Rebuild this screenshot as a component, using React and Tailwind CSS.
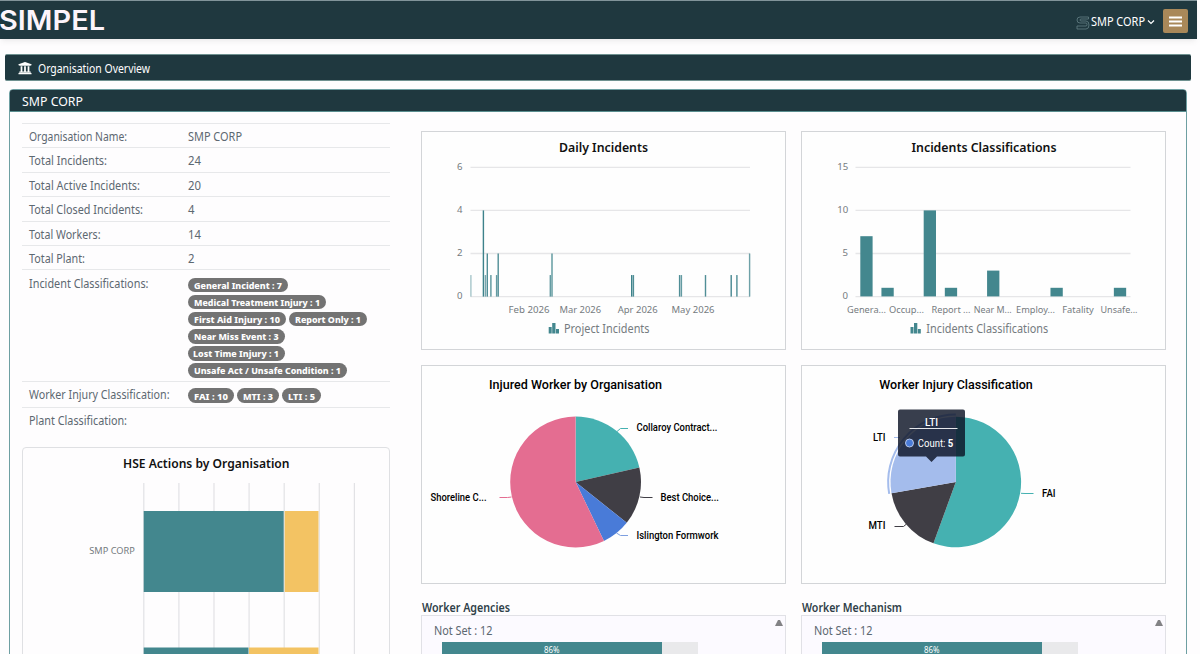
import { FaUniversity } from "react-icons/fa"

const summary = [
  { label: "Organisation Name:", value: "SMP CORP", width: 98, valueWidth: 54 },
  { label: "Total Incidents:", value: "24", width: 78, valueWidth: 13 },
  { label: "Total Active Incidents:", value: "20", width: 111, valueWidth: 13 },
  { label: "Total Closed Incidents:", value: "4", width: 114, valueWidth: 6.5 },
  { label: "Total Workers:", value: "14", width: 71.5, valueWidth: 13 },
  { label: "Total Plant:", value: "2", width: 56, valueWidth: 6.5 },
]

const incidentTags = [
  { text: "General Incident : 7", size: "w-[100px]", width: 88 },
  { text: "Medical Treatment Injury : 1", size: "w-[138px]", width: 126 },
  { text: "First Aid Injury : 10", size: "w-[98px]", width: 86 },
  { text: "Report Only : 1", size: "w-[78px]", width: 66 },
  { text: "Near Miss Event : 3", size: "w-[97px]", width: 84.5 },
  { text: "Lost Time Injury : 1", size: "w-[97px]", width: 86 },
  { text: "Unsafe Act / Unsafe Condition : 1", size: "w-[159px]", width: 147 },
]

const injuryTags = [
  { text: "FAI : 10", size: "w-[46px]", width: 34 },
  { text: "MTI : 3", size: "w-[42px]", width: 30 },
  { text: "LTI : 5", size: "w-[39px]", width: 27 },
]

const dailyBars = [
  [48.9, 1, 0.45], [61.4, 4, 1], [63.4, 1, 0.7], [65.3, 2, 0.9], [68.9, 1, 0.85],
  [74.6, 1, 0.8], [76.2, 2, 0.9], [128.3, 1, 0.8], [130, 2, 0.85], [209.7, 1, 1],
  [211.4, 1, 0.9], [257.6, 1, 0.9], [259.4, 1, 0.8], [283.5, 1, 0.9], [309.2, 1, 0.95],
  [314.9, 1, 0.9], [327.6, 2, 0.75],
]

const classificationBars = [7, 1, 0, 10, 1, 0, 3, 0, 0, 1, 0, 0, 1]

const organisationSlices = [
  { value: 3, color: "#45b1b1" },
  { value: 2, color: "#403e45" },
  { value: 1, color: "#497bd8" },
  { value: 8, color: "#e46d91" },
]

const injurySlices = [
  { value: 10, color: "#45b1b1" },
  { value: 3, color: "#403e45" },
  { value: 5, color: "#a4bcec" },
]

function Label({ children, width, size = 12, height = 16, base = 12, weight = 400, className = "" }) {
  return (
    <svg width={width} height={height} className={`block shrink-0 overflow-visible ${className}`}>
      <text x="0" y={base} fontSize={size} fontWeight={weight} textLength={width} lengthAdjust="spacingAndGlyphs" fill="currentColor">
        {children}
      </text>
    </svg>
  )
}

function ChartText({ x, y, width, size = 9.5, fill = "#757b7f", weight = 400, children }) {
  return (
    <text x={x} y={y} textLength={width} lengthAdjust="spacingAndGlyphs" fontSize={size} fontWeight={weight} fill={fill}>
      {children}
    </text>
  )
}

function Tag({ tag }) {
  return (
    <span className={`flex h-[14.5px] items-center justify-center rounded-full bg-[#737373] text-white ${tag.size}`}>
      <Label width={tag.width} size={9.5} height={14} base={10.5} weight={800}>{tag.text}</Label>
    </span>
  )
}

function Card({ children }) {
  return <div className="h-[219px] w-[365px] border border-[#d3d5d8] bg-[#fefefe]">{children}</div>
}

function ColumnIcon({ x, y }) {
  return (
    <g fill="#43878e">
      <rect x={x} y={y + 4} width="3" height="6.500" />
      <rect x={x + 3.5} y={y} width="3.300" height="10.500" />
      <rect x={x + 7.3} y={y + 6} width="3" height="4.500" />
    </g>
  )
}

function slicePath(cx, cy, r, from, to) {
  const a = (from - 90) * (Math.PI / 180)
  const b = (to - 90) * (Math.PI / 180)
  const large = to - from > 180 ? 1 : 0
  return `M${cx} ${cy}L${cx + r * Math.cos(a)} ${cy + r * Math.sin(a)}A${r} ${r} 0 ${large} 1 ${cx + r * Math.cos(b)} ${cy + r * Math.sin(b)}Z`
}

function Pie({ slices, cx, cy, r }) {
  const total = slices.reduce((sum, s) => sum + s.value, 0)
  let start = 0
  return slices.map((s) => {
    const from = start
    start += (s.value / total) * 360
    return <path key={s.color} d={slicePath(cx, cy, r, from, start)} fill={s.color} />
  })
}

function DailyIncidents() {
  return (
    <svg width="363" height="217" className="block">
      <ChartText x={137} y={19.5} width={89} size={13} weight={600} fill="#111">Daily Incidents</ChartText>
      {[6, 4, 2, 0].map((n, i) => (
        <g key={n}>
          <line x1="48.500" x2="328" y1={35.3 + i * 43.1} y2={35.3 + i * 43.1} stroke="#e6e6e8" strokeWidth="1.300" />
          <ChartText x={35} y={38 + i * 43.1} width={5.5}>{n}</ChartText>
        </g>
      ))}
      {dailyBars.map(([x, value, opacity]) => (
        <rect key={x} x={x - 0.7} y={164.6 - value * 21.55} width="1.400" height={value * 21.55} fill="#3d828b" opacity={opacity} />
      ))}
      <ChartText x={86.5} y={180.5} width={41}>Feb 2026</ChartText>
      <ChartText x={137.5} y={180.5} width={41.5}>Mar 2026</ChartText>
      <ChartText x={195.7} y={180.5} width={40}>Apr 2026</ChartText>
      <ChartText x={249.5} y={180.5} width={43}>May 2026</ChartText>
      <ColumnIcon x={126.7} y={191} />
      <ChartText x={142} y={201} width={85.5} size={12}>Project Incidents</ChartText>
    </svg>
  )
}

function IncidentsClassifications() {
  return (
    <svg width="363" height="217" className="block">
      <ChartText x={109.5} y={19.5} width={145} size={13} weight={600} fill="#111">Incidents Classifications</ChartText>
      {[15, 10, 5, 0].map((n, i) => (
        <g key={n}>
          <line x1="53.500" x2="328.500" y1={35.3 + i * 43.1} y2={35.3 + i * 43.1} stroke="#e6e6e8" strokeWidth="1.300" />
          <ChartText x={n > 9 ? 35.3 : 40.5} y={38 + i * 43.1} width={n > 9 ? 11 : 5.5}>{n}</ChartText>
        </g>
      ))}
      {classificationBars.map((value, i) => (
        <rect key={i} x={58.3 + i * 21.13} y={164.4 - value * 8.6} width="12.300" height={value * 8.6} fill="#43878e" />
      ))}
      <ChartText x={45} y={180.5} width={39}>Genera...</ChartText>
      <ChartText x={87} y={180.5} width={35}>Occup...</ChartText>
      <ChartText x={129.5} y={180.5} width={39}>Report ...</ChartText>
      <ChartText x={171.7} y={180.5} width={38}>Near M...</ChartText>
      <ChartText x={214} y={180.5} width={39}>Employ...</ChartText>
      <ChartText x={260.3} y={180.5} width={31.5}>Fatality</ChartText>
      <ChartText x={298.5} y={180.5} width={37}>Unsafe...</ChartText>
      <ColumnIcon x={108.5} y={191} />
      <ChartText x={124.3} y={201} width={122} size={12}>Incidents Classifications</ChartText>
    </svg>
  )
}

function InjuredWorkers() {
  return (
    <svg width="363" height="217" className="block font-[Roboto,sans-serif]">
      <ChartText x={67} y={23} width={173} size={13} weight={500} fill="#000">Injured Worker by Organisation</ChartText>
      <Pie slices={organisationSlices} cx={153.6} cy={116} r={65.4} />
      <g fill="none" strokeWidth="1">
        <path d="M195 65.500l3.500-3h7.500" stroke="#45b1b1" />
        <path d="M218 131l4 .500h8.500" stroke="#403e45" />
        <path d="M194.500 167l4 2.500h7.500" stroke="#7d9fe0" />
        <path d="M89.500 131l-4 .500h-8" stroke="#e46d91" />
      </g>
      <ChartText x={214.5} y={65.3} width={81} size={10} weight={500} fill="#000">Collaroy Contract...</ChartText>
      <ChartText x={238.5} y={134.8} width={58.5} size={10} weight={500} fill="#000">Best Choice...</ChartText>
      <ChartText x={214.5} y={172.8} width={82} size={10} weight={500} fill="#000">Islington Formwork</ChartText>
      <ChartText x={8.5} y={134.8} width={56} size={10} weight={500} fill="#000">Shoreline C...</ChartText>
    </svg>
  )
}

function InjuryClassification() {
  return (
    <svg width="363" height="217" className="block font-[Roboto,sans-serif]">
      <ChartText x={77.3} y={23} width={153.5} size={13} weight={500} fill="#000">Worker Injury Classification</ChartText>
      <Pie slices={injurySlices} cx={153.8} cy={116} r={65.3} />
      <path d="M87.200 127.800A67.600 67.600 0 0 1 153.800 48.400" fill="none" stroke="#a4bcec" strokeWidth="2" />
      <g fill="none" strokeWidth="1">
        <path d="M219 127.300l4 .200h8.500" stroke="#45b1b1" />
        <path d="M104.500 158l-3 2.500h-9" stroke="#403e45" />
        <path d="M98 71.500h-6" stroke="#a4bcec" />
      </g>
      <ChartText x={240} y={131.3} width={13.5} size={10} weight={500} fill="#000">FAI</ChartText>
      <ChartText x={66.5} y={163} width={17} size={10} weight={500} fill="#000">MTI</ChartText>
      <ChartText x={71} y={75} width={12.5} size={10} weight={500} fill="#000">LTI</ChartText>
      {/* Tooltip */}
      <path d="M98 43.500h63a2 2 0 0 1 2 2v43a2 2 0 0 1-2 2h-26l-5.500 5.500-5.500-5.500H98a2 2 0 0 1-2-2v-43a2 2 0 0 1 2-2z" fill="#0c1426" opacity=".82" />
      <ChartText x={123} y={60} width={13} size={10} weight={500} fill="#fff">LTI</ChartText>
      <line x1="107.500" x2="155.500" y1="62.500" y2="62.500" stroke="#e5e7eb" />
      <circle cx="107.500" cy="77" r="4" fill="#497bd8" stroke="#b8c7e8" />
      <ChartText x={115.8} y={81} width={27.5} size={10} fill="#fff">Count:</ChartText>
      <ChartText x={145.8} y={81} width={5.5} size={10} weight={700} fill="#fff">5</ChartText>
    </svg>
  )
}

function HseActions() {
  return (
    <div className="mt-[15px] h-[240px] w-[368px] rounded-t-sm border border-[#dfe0e3]">
      <svg width="366" height="238" className="block">
        <ChartText x={100} y={19.5} width={166.5} size={13} weight={600} fill="#111">HSE Actions by Organisation</ChartText>
        {[0, 1, 2, 3, 4, 5, 6].map((n) => (
          <line key={n} x1={120.8 + n * 35.1} x2={120.8 + n * 35.1} y1="35" y2="238" stroke="#e2e2e5" strokeWidth="1.200" />
        ))}
        <ChartText x={66.3} y={105.5} width={45.5}>SMP CORP</ChartText>
        <rect x="120.700" y="63" width="140" height="81" fill="#43878e" />
        <rect x="261.700" y="63" width="33.800" height="81" fill="#f3c363" />
        <rect x="120.700" y="199.500" width="104.800" height="39" fill="#43878e" />
        <rect x="226" y="199.500" width="69.500" height="39" fill="#f3c363" />
      </svg>
    </div>
  )
}

function ProgressPanel({ title, width }) {
  return (
    <div className="mt-[15px] w-[365px]">
      <Label width={width} weight={600} size={12} height={16} base={12.5} className="ml-[.6px] text-[#2f4048]">{title}</Label>
      <div className="flex h-20 justify-between border border-[#e1e1e6] bg-[#fcfaff] pt-2 pr-[2px] pl-3">
        <div className="text-[#5d6871]">
          <Label width={58.5} height={18} base={11}>Not Set : 12</Label>
          <div className="ml-2 flex h-4 w-64 bg-[#e9e9eb] text-white">
            <div className="flex w-[220px] justify-center bg-[#43878e]">
              <Label width={15.5} size={8.5} height={12} base={11}>86%</Label>
            </div>
          </div>
        </div>
        <svg width="8" height="6" viewBox="0 0 8 6" className="-mt-[4px]">
          <path d="M3 0h2l3 6H0z" fill="#828285" />
        </svg>
      </div>
    </div>
  )
}

function TopBar() {
  return (
    <header className="flex h-[39px] w-[1197px] items-center justify-between border-t border-[#81949a] bg-[#1f383f] pt-0.5 shadow-md shadow-black/5">
      <Label width={106} size={26.5} height={30} base={24} weight={600} className="-ml-px font-[Inter,sans-serif] text-[#fdf4fb]">SIMPEL</Label>
      <div className="flex items-center pr-[9px] text-white">
        <svg width="14" height="14" viewBox="0 0 14 14" fill="none" stroke="#648187" strokeWidth=".8" className="mt-1">
          <path d="M12.500 1H4Q1 1 1 4t3 3h6q1 0 1 1.500T10 10H1v3h9q3 0 3-4T10 5H5q-1 0-1-1t1-1h7.500z" />
        </svg>
        <Label width={54} height={16} base={13} className="ml-[1.500px]">SMP CORP</Label>
        <svg width="8" height="6" viewBox="0 0 8 6" fill="none" stroke="currentColor" strokeWidth="1.200" className="mt-0.5 ml-0.5">
          <path d="M1 1.500l3 3 3-3" />
        </svg>
        <button className="ml-2 flex h-6 w-[25px] items-center justify-center rounded-xs bg-[#a98859]">
          <svg width="13" height="11" viewBox="0 0 13 11" stroke="white" strokeWidth="2">
            <path d="M0 1.500h13M0 5.500h13M0 9.500h13" />
          </svg>
        </button>
      </div>
    </header>
  )
}

export default function App() {
  return (
    <main className="h-[654px] w-[1200px] overflow-hidden bg-[#fefdfe] font-['Noto_Sans',sans-serif]">
      <TopBar />
      <div className="mt-[15px] ml-[5px] flex h-[27px] w-[1186px] items-center rounded-xs border-y border-[#6f9190] bg-[#1f383f] pl-[13px] text-white">
        <FaUniversity className="h-3.5 w-3.5" />
        <Label width={112} height={16} base={13} className="ml-[5.500px]">Organisation Overview</Label>
      </div>
      <section className="mt-2 ml-[9px] h-[600px] w-[1178px] rounded-t border border-[#6e9fa2]">
        <div className="flex h-[22px] items-center rounded-t-xs border-b border-[#5a8e90] bg-[#1f383f] pl-3 text-white">
          <Label width={61} size={13} height={18} base={14}>SMP CORP</Label>
        </div>
        <div className="flex">
          <div className="mt-[11px] ml-[11.500px] w-[368px] text-[#5d6871]">
            {summary.map((row) => (
              <div key={row.label} className="flex h-[24.420px] border-t border-[#e7e8ea] pt-[5px] pl-[7.500px]">
                <div className="w-[158.500px]"><Label width={row.width}>{row.label}</Label></div>
                <Label width={row.valueWidth}>{row.value}</Label>
              </div>
            ))}
            <div className="flex h-[112px] border-t border-[#e7e8ea] pl-[7.500px]">
              <div className="w-[158.500px] pt-[6px]"><Label width={119.5}>Incident Classifications:</Label></div>
              <div className="flex w-[190px] flex-wrap content-start gap-x-[3px] gap-y-[2.600px] pt-[7.300px]">
                {incidentTags.map((tag) => <Tag key={tag.text} tag={tag} />)}
              </div>
            </div>
            <div className="flex h-[25.500px] border-t border-[#e7e8ea] pl-[7.500px]">
              <div className="w-[158.500px] pt-[5px]"><Label width={140.5}>Worker Injury Classification:</Label></div>
              <div className="flex gap-[3px] pt-1.5">
                {injuryTags.map((tag) => <Tag key={tag.text} tag={tag} />)}
              </div>
            </div>
            <div className="h-[25px] border-t border-[#e7e8ea] pt-[5px] pl-[7.500px]">
              <Label width={98}>Plant Classification:</Label>
            </div>
            <HseActions />
          </div>
          <div className="mt-[19px] ml-[31.500px]">
            <div className="grid grid-cols-2 gap-x-[15px] gap-y-[15px]">
              <Card><DailyIncidents /></Card>
              <Card><IncidentsClassifications /></Card>
              <Card><InjuredWorkers /></Card>
              <Card><InjuryClassification /></Card>
            </div>
            <div className="flex gap-[15px]">
              <ProgressPanel title="Worker Agencies" width={88} />
              <ProgressPanel title="Worker Mechanism" width={100} />
            </div>
          </div>
        </div>
      </section>
    </main>
  )
}
